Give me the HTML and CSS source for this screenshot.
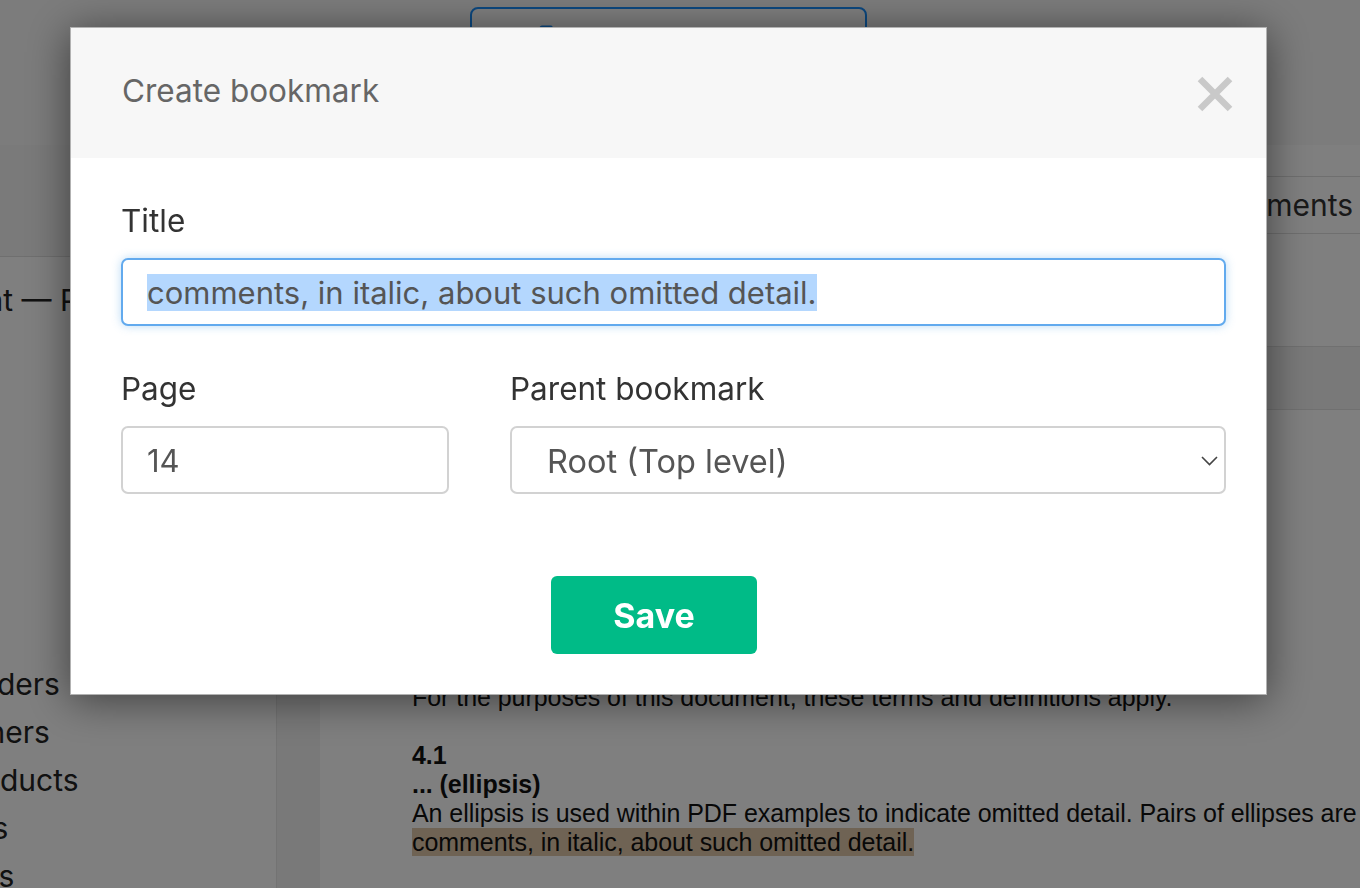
FILE: index.html
```html
<!DOCTYPE html>
<html lang="en">
<head>
    <meta charset="UTF-8">
    <meta name="viewport" content="width=device-width, initial-scale=1.0">
    <title>Create bookmark</title>
    <link rel="stylesheet" href="styles.css">
</head>
<body>
    <header class="topbar">
        <button class="open-btn" type="button">
            <svg class="open-icon" width="19" height="24" viewBox="0 0 19 24">
                <path d="M3 1.5h9l5.5 5.5v14a1.5 1.5 0 0 1-1.5 1.5H3A1.5 1.5 0 0 1 1.5 21V3A1.5 1.5 0 0 1 3 1.5z" fill="none" stroke="#1890ff" stroke-width="2"/>
            </svg>
            Open document
        </button>
    </header>

    <div class="workspace">
        <aside class="sidebar">
            <div class="sidebar-head"></div>
            <ul class="outline">
                <li>Front — PDF 2.0</li>
                <li>
                    <ul class="outline-sub">
                        <li>Foreword</li>
                        <li>Introduction</li>
                        <li>1 Scope</li>
                        <li>2 Normative references</li>
                        <li>3 Terms and definitions</li>
                        <li>4 Notation</li>
                        <li>5 Version designations</li>
                    </ul>
                </li>
                <li>Headers</li>
                <li>Owners</li>
                <li class="indent">Products</li>
                <li>Tags</li>
                <li>Links</li>
            </ul>
        </aside>
        <div class="gutter"></div>
        <main class="viewer">
            <div class="tabs">
                <span>Bookmarks</span>
                <span>Comments</span>
            </div>
            <div class="toolbar"></div>
            <article class="page">
                <h2>4 Notation</h2>
                <p class="para">For the purposes of this document, these terms and definitions apply.</p>
                <p class="term">4.1</p>
                <p class="term">... (ellipsis)</p>
                <p>An ellipsis is used within PDF examples to indicate omitted detail. Pairs of ellipses are also used to bracket</p>
                <p><span class="mark">comments, in italic, about such omitted detail.</span></p>
            </article>
        </main>
    </div>

    <div class="overlay">
        <div class="modal">
            <div class="modal-header">
                <h3>Create bookmark</h3>
                <button class="close" type="button" aria-label="Close">
                    <svg width="36" height="36" viewBox="0 0 36 36">
                        <path d="M3 3L33 33M33 3L3 33" stroke="#c9c9c9" stroke-width="6.5"/>
                    </svg>
                </button>
            </div>
            <form class="modal-body" id="bookmarkForm">
                <div class="field">
                    <label for="title">Title</label>
                    <input type="text" id="title" class="is-active" value="comments, in italic, about such omitted detail.">
                </div>
                <div class="row">
                    <div class="field">
                        <label for="page">Page</label>
                        <input type="text" id="page" value="14">
                    </div>
                    <div class="field">
                        <label for="parent">Parent bookmark</label>
                        <div class="select-wrap">
                            <select id="parent">
                                <option>Root (Top level)</option>
                            </select>
                            <svg class="chevron" width="17" height="10" viewBox="0 0 17 10">
                                <path d="M1 1l7.5 7.5L16 1" fill="none" stroke="#444" stroke-width="1.6"/>
                            </svg>
                        </div>
                    </div>
                </div>
                <div class="actions">
                    <button type="submit" class="save">Save</button>
                </div>
            </form>
        </div>
    </div>

    <script>
        const titleInput = document.getElementById('title');
        titleInput.focus();
        titleInput.select();
    </script>
</body>
</html>
```

FILE: styles.css
```css
* {
    box-sizing: border-box;
}
body {
    margin: 0;
    height: 888px;
    overflow: hidden;
    font-family: Inter, "Noto Sans", sans-serif;
    color: #222;
    background: #fff;
}

/* app chrome behind the dialog */
.topbar {
    height: 145px;
    background: #f8f8f8;
    padding: 7px 0 0 470px;
}
.open-btn {
    display: flex;
    align-items: flex-start;
    gap: 14px;
    width: 397px;
    height: 64px;
    padding: 16px 0 0 67px;
    border: 2px solid #1890ff;
    border-radius: 8px;
    background: #fff;
    color: #1890ff;
    font: 24px Inter, sans-serif;
}
.workspace {
    display: flex;
    height: 743px;
}
.sidebar {
    width: 277px;
    border-right: 1px solid #e6e6e6;
    overflow: hidden;
}
.sidebar-head {
    height: 112px;
    background: #f5f5f5;
    border-bottom: 1px solid #dedede;
}
.outline {
    list-style: none;
    margin: 0 0 0 -60px;
    padding: 19px 0 0;
    font-size: 30px;
    line-height: 48px;
    white-space: nowrap;
}
.outline-sub {
    list-style: none;
    margin: 0;
    padding-left: 160px;
}
.outline .indent {
    padding-left: 12px;
}
.gutter {
    width: 43px;
    background: #f3f3f3;
}
.viewer {
    flex: 1;
    min-width: 0;
    padding-top: 31px;
    overflow: hidden;
}
.tabs {
    display: flex;
    justify-content: flex-end;
    align-items: center;
    gap: 40px;
    height: 58px;
    padding-right: 7px;
    border-top: 1px solid #dedede;
    border-bottom: 1px solid #dedede;
    font-size: 30px;
    color: #333;
}
.toolbar {
    height: 64px;
    margin-top: 112px;
    background: #f2f2f2;
    border-top: 1px solid #e0e0e0;
    border-bottom: 1px solid #e0e0e0;
}
.page {
    padding: 215px 0 0 92px;
    font-family: "Liberation Sans", Arial, sans-serif;
    font-size: 25px;
    line-height: 29px;
    letter-spacing: -0.05px;
    color: #111;
    white-space: nowrap;
}
.page h2 {
    margin: 0 0 29px;
    font-size: 25px;
    line-height: 29px;
}
.page p {
    margin: 0;
}
.page .para {
    margin-bottom: 29px;
}
.page .term {
    font-weight: bold;
}
.mark {
    background: #dfc6a8;
}

/* dialog */
.overlay {
    position: fixed;
    inset: 0;
    padding: 27px 0 0 70px;
    background: rgba(0, 0, 0, 0.5);
}
.modal {
    width: 1197px;
    height: 668px;
    background: #fff;
    border: 1px solid rgba(0, 0, 0, 0.3);
    box-shadow: 0 5px 40px rgba(0, 0, 0, 0.5);
}
.modal-header {
    display: flex;
    justify-content: space-between;
    align-items: center;
    height: 130px;
    padding: 0 33px 6px 51px;
    background: #f7f7f7;
}
.modal-header h3 {
    margin: 0;
    font-size: 31.5px;
    font-weight: 400;
    color: #666;
}
.close {
    display: flex;
    padding: 0;
    margin-top: 8px;
    border: none;
    background: none;
    cursor: pointer;
}
.modal-body {
    padding: 44px 40px 0 50px;
}
.field label {
    display: block;
    margin-bottom: 18px;
    font-size: 31.5px;
    line-height: 38px;
    color: #333;
}
.field input,
.field select {
    width: 100%;
    height: 68px;
    padding: 0 24px;
    border: 2px solid #d2d2d2;
    border-radius: 7px;
    background: #fff;
    font: 31px Inter, sans-serif;
    color: #555;
    outline: none;
}
.field input.is-active {
    border-color: #62aaee;
    box-shadow: 0 0 10px rgba(102, 175, 233, 0.45);
}
.field input::selection {
    background: #b4d7fe;
    color: #555;
}
.row {
    display: grid;
    grid-template-columns: 328px 1fr;
    gap: 61px;
    margin-top: 44px;
}
.select-wrap {
    position: relative;
}
.field select {
    appearance: none;
    padding: 2px 60px 0 35px;
    font-size: 32.5px;
}
.chevron {
    position: absolute;
    right: 8px;
    top: 30px;
    pointer-events: none;
}
.actions {
    display: flex;
    justify-content: center;
    padding-right: 39px;
    margin-top: 82px;
}
.save {
    width: 206px;
    height: 78px;
    padding-top: 2px;
    border: none;
    border-radius: 6px;
    background: #00bb87;
    color: #fff;
    font: bold 34px Inter, sans-serif;
    cursor: pointer;
}
```
